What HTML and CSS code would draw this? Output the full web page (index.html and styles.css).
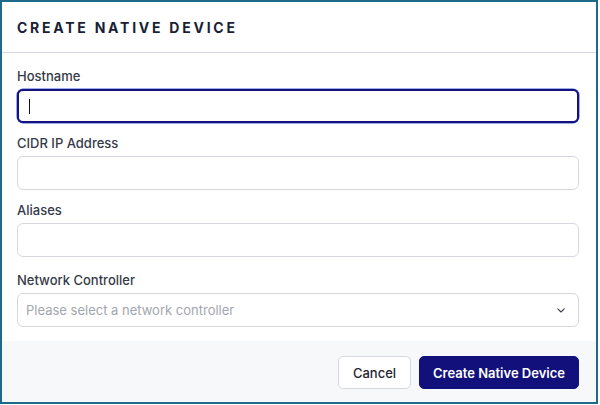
FILE: index.html
```html
<!DOCTYPE html>
<html lang="en">
<head>
<meta charset="utf-8">
<title>Create Native Device</title>
<link rel="stylesheet" href="styles.css">
</head>
<body>
<div class="modal">
  <div class="modal-header">
    <h2 class="modal-title">CREATE NATIVE DEVICE</h2>
  </div>
  <div class="modal-body">
    <div class="field">
      <label class="field-label">Hostname</label>
      <div class="input input-focus"><span class="caret"></span></div>
    </div>
    <div class="field">
      <label class="field-label">CIDR IP Address</label>
      <div class="input"></div>
    </div>
    <div class="field">
      <label class="field-label">Aliases</label>
      <div class="input"></div>
    </div>
    <div class="field field-select">
      <label class="field-label">Network Controller</label>
      <div class="input select">
        <span class="placeholder">Please select a network controller</span>
        <svg class="chevron" width="8" height="5" viewBox="0 0 8 5"><path d="M0.8 0.8 L4 4 L7.2 0.8" fill="none" stroke="#3a3f4b" stroke-width="1.1" stroke-linecap="round" stroke-linejoin="round"/></svg>
      </div>
    </div>
  </div>
  <div class="modal-footer">
    <button class="btn btn-secondary">Cancel</button>
    <button class="btn btn-primary">Create Native Device</button>
  </div>
</div>
</body>
</html>
```

FILE: styles.css
```css
html, body {
  margin: 0;
  padding: 0;
  background: #ffffff;
}
body {
  font-family: "Inter", "Noto Sans", sans-serif;
  color: #1a1f36;
}
.modal {
  box-sizing: border-box;
  width: 598px;
  height: 404px;
  border: 2px solid #1d6a8a;
  background: #ffffff;
  display: flex;
  flex-direction: column;
}
.modal-header {
  height: 50px;
  border-bottom: 1px solid #d3d6de;
  display: flex;
  align-items: center;
  padding-left: 15px;
}
.modal-title {
  margin: 0;
  font-size: 14px;
  font-weight: 700;
  letter-spacing: 2.75px;
  color: #1a1f36;
}
.modal-body {
  padding: 15px 17px 14px 15px;
  display: flex;
  flex-direction: column;
}
.field {
  display: flex;
  flex-direction: column;
  margin-bottom: 12px;
}
.field-select {
  margin-top: 3px;
  margin-bottom: 0;
}
.field-label {
  font-size: 13px;
  line-height: 16px;
  font-weight: 500;
  color: #353a48;
  margin-bottom: 5px;
}
.input {
  box-sizing: border-box;
  height: 34px;
  border: 1px solid #d5d8de;
  border-radius: 6px;
  background: #ffffff;
  display: flex;
  align-items: center;
  padding: 0 9px;
}
.input-focus {
  border: 2px solid #14127c;
  box-shadow: 0 0 0 0.5px #3d5bd6;
  padding: 0 10px;
}
.caret {
  width: 1px;
  height: 15px;
  background: #111111;
}
.select {
  justify-content: space-between;
  padding: 0 13px 0 8px;
}
.placeholder {
  font-size: 13px;
  color: #a3a6ae;
}
.chevron {
  display: block;
}
.modal-footer {
  flex: 1;
  background: #f7f8fa;
  display: flex;
  justify-content: flex-end;
  align-items: flex-start;
  gap: 8px;
  padding: 15px 17px 0 0;
}
.btn {
  box-sizing: border-box;
  height: 33px;
  border-radius: 5px;
  font-family: "Inter", "Noto Sans", sans-serif;
  font-size: 13px;
  cursor: pointer;
}
.btn-secondary {
  width: 73px;
  background: #ffffff;
  border: 1px solid #d5d8de;
  color: #1f2430;
  font-weight: 500;
}
.btn-primary {
  width: 160px;
  background: #12107a;
  border: 1px solid #12107a;
  color: #ffffff;
  font-weight: 600;
}
```
